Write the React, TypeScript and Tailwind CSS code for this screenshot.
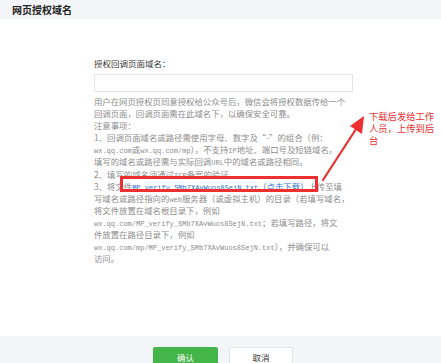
import React from 'react';

const Mono: React.FC<{ children: React.ReactNode; className?: string }> = ({ children, className }) => (
  <span className={`font-['Liberation_Mono',monospace] text-[7px] leading-none ${className ?? ''}`}>{children}</span>
);

const lines: React.ReactNode[] = [
  <>用户在网页授权页同意授权给公众号后，微信会将授权数据传给一个</>,
  <>回调页面，回调页面需在此域名下，以确保安全可靠。</>,
  <>注意事项：</>,
  <>1、回调页面域名或路径需使用字母、数字及“-”的组合（例：</>,
  <>
    <Mono>wx.qq.com</Mono>或<Mono>wx.qq.com/mp</Mono>），不支持<Mono>IP</Mono>地址、端口号及短链域名。
  </>,
  <>
    填写的域名或路径需与实际回调<Mono>URL</Mono>中的域名或路径相同。
  </>,
  <>
    2、填写的域名须通过<Mono>ICP</Mono>备案的验证。
  </>,
  <>
    3、将文件
    <span className="text-[#2f6fcf]">
      <Mono>MP_verify_SMb7XAvWuos8SejN.txt</Mono>（点击下载）
    </span>
    上传至填
  </>,
  <>
    写域名或路径指向的<Mono>web</Mono>服务器（或虚拟主机）的目录（若填写域名，
  </>,
  <>将文件放置在域名根目录下，例如</>,
  <>
    <Mono>wx.qq.com/MP_verify_SMb7XAvWuos8SejN.txt</Mono>；若填写路径，将文
  </>,
  <>件放置在路径目录下，例如</>,
  <>
    <Mono>wx.qq.com/mp/MP_verify_SMb7XAvWuos8SejN.txt</Mono>），并确保可以
  </>,
  <>访问。</>,
];

export default function App() {
  return (
    <div className="relative flex h-[363px] w-[441px] flex-col overflow-hidden bg-white font-['Noto_Sans_CJK_SC',sans-serif]">
      {/* header */}
      <div className="flex h-[19px] shrink-0 items-center bg-[#f4f5f9] pl-[12px]">
        <span className="text-[10px] font-bold leading-none text-[#222]">网页授权域名</span>
      </div>

      {/* body */}
      <div className="flex flex-1 flex-col pl-[94px] pt-[38px]">
        <div className="text-[8.5px] leading-[13px] text-[#353535]">授权回调页面域名：</div>
        <div className="mt-[4px] h-[18px] w-[259px] border border-[#e4e4e8] bg-white" />
        <div className="mt-[3px] flex flex-col text-[8.4px] leading-[12px] text-[#8d8d8d]">
          {lines.map((l, i) => (
            <div key={i} className="h-[12.1px] whitespace-nowrap">
              {l}
            </div>
          ))}
        </div>
      </div>

      {/* footer */}
      <div className="flex h-[27px] shrink-0 justify-center gap-[11px] bg-[#f4f5f9] pl-[5px] pt-[11px]">
        <button className="flex h-[20px] w-[65px] items-center justify-center rounded-[2px] bg-[#44b549] text-[8.5px] text-white">
          确认
        </button>
        <button className="flex h-[20px] w-[64px] items-center justify-center rounded-[2px] border border-[#e4e4e8] bg-white text-[8.5px] text-[#353535]">
          取消
        </button>
      </div>

      {/* annotation: red box */}
      <div className="absolute left-[120px] top-[176px] h-[16px] w-[198px] border-[3px] border-[#ec2f2f]" />

      {/* annotation: arrow */}
      <svg className="absolute left-[318px] top-[112px]" width="52" height="72" viewBox="0 0 52 72">
        <line x1="5" y1="68" x2="40" y2="14" stroke="#ec2f2f" strokeWidth="2.2" strokeLinecap="round" />
        <polygon points="46,4 44,22 32,14" fill="#ec2f2f" />
      </svg>

      {/* annotation: note */}
      <div className="absolute left-[369px] top-[110px] flex flex-col text-[9.3px] leading-[12px] text-[#e8302f]">
        <span className="h-[12px]">下载后发给工作</span>
        <span className="h-[12px]">人员，上传到后</span>
        <span className="h-[12px]">台</span>
      </div>
    </div>
  );
}
